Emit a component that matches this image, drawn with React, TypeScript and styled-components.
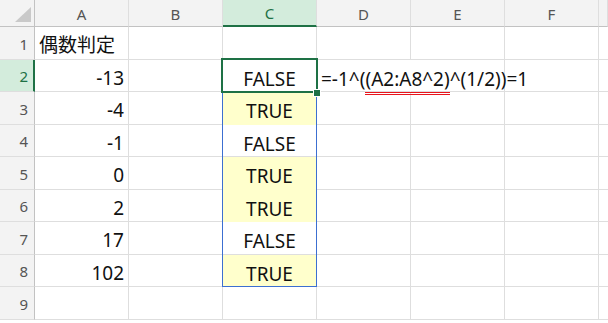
import styled, { createGlobalStyle, css } from 'styled-components';

const GlobalStyle = createGlobalStyle`
  html, body {
    margin: 0;
    padding: 0;
    background: #fff;
    overflow: hidden;
  }
`;

const GRID = '#dedede';
const HEAD_LINE = '#c2c2c2';
const GREEN = '#1e7145';
const BLUE = '#3c6fd1';
const YELLOW = '#ffffcc';

const Sheet = styled.div`
  display: grid;
  grid-template-columns: 35px repeat(6, 94px) 1fr;
  grid-template-rows: 27px repeat(9, 32.5px);
  width: 608px;
  height: 323px;
  overflow: hidden;
  font-family: 'Noto Sans', 'Noto Sans CJK JP', sans-serif;
`;

const Corner = styled.div`
  position: relative;
  background: #f3f3f3;
  border-right: 1px solid ${HEAD_LINE};
  border-bottom: 1px solid ${HEAD_LINE};
  box-sizing: border-box;

  &::after {
    content: '';
    position: absolute;
    right: 3px;
    bottom: 4px;
    width: 0;
    height: 0;
    border-left: 16px solid transparent;
    border-bottom: 15px solid #c9c9c9;
  }
`;

const ColHead = styled.div<{ $selected?: boolean }>`
  display: flex;
  align-items: center;
  justify-content: center;
  box-sizing: border-box;
  font-size: 15px;
  padding-top: 1px;
  color: #555;
  background: #f3f3f3;
  border-right: 1px solid ${GRID};
  border-bottom: 1px solid ${HEAD_LINE};
  ${p =>
    p.$selected &&
    css`
      background: #d3ecdc;
      color: ${GREEN};
      border-bottom: 2px solid ${GREEN};
    `}
`;

const RowHead = styled.div<{ $selected?: boolean }>`
  display: flex;
  align-items: center;
  justify-content: flex-end;
  box-sizing: border-box;
  padding: 2px 6px 0 0;
  font-size: 15px;
  color: #555;
  background: #f3f3f3;
  border-right: 1px solid ${HEAD_LINE};
  border-bottom: 1px solid ${GRID};
  ${p =>
    p.$selected &&
    css`
      background: #d3ecdc;
      color: ${GREEN};
      border-right: 2px solid ${GREEN};
      padding-right: 5px;
    `}
`;

type Align = 'left' | 'right' | 'center';
type Mark = 'active' | 'top' | 'mid' | 'bottom';

const Cell = styled.div<{ $align?: Align; $fill?: boolean; $spill?: boolean; $mark?: Mark; $drop?: number }>`
  position: relative;
  display: flex;
  align-items: center;
  box-sizing: border-box;
  padding: ${p => p.$drop ?? 5}px 4px 0;
  font-size: 19px;
  color: #111;
  white-space: nowrap;
  justify-content: ${p =>
    p.$align === 'right' ? 'flex-end' : p.$align === 'center' ? 'center' : 'flex-start'};
  background: ${p => (p.$fill ? YELLOW : 'transparent')};
  border-right: 1px solid ${p => (p.$spill ? 'transparent' : GRID)};
  border-bottom: 1px solid ${p => (p.$fill ? 'transparent' : GRID)};
  z-index: ${p => (p.$mark === 'active' ? 2 : p.$mark ? 1 : 'auto')};

  ${p =>
    p.$mark === 'active' &&
    css`
      &::before {
        content: '';
        position: absolute;
        left: -2px;
        right: -2px;
        top: -2px;
        bottom: -2px;
        border: 2px solid ${GREEN};
        pointer-events: none;
      }
      &::after {
        content: '';
        position: absolute;
        right: -4px;
        bottom: -5px;
        width: 6px;
        height: 6px;
        background: ${GREEN};
        outline: 1px solid #fff;
      }
    `}

  ${p =>
    p.$mark &&
    p.$mark !== 'active' &&
    css`
      &::before {
        content: '';
        position: absolute;
        left: -1px;
        right: -1px;
        top: ${p.$mark === 'top' ? '-1px' : '0'};
        bottom: -1px;
        border-left: 1px solid ${BLUE};
        border-right: 1px solid ${BLUE};
        ${p.$mark === 'bottom' && `border-bottom: 1px solid ${BLUE};`}
        pointer-events: none;
      }
    `}
`;

const Formula = styled.span`
  position: relative;
  z-index: 3;
`;

const Squiggle = styled.span`
  border-bottom: 3px double #e8141c;
`;

const COLS = ['A', 'B', 'C', 'D', 'E', 'F'];

type Row = { a?: string; aAlign?: Align; c?: string };

const ROWS: Row[] = [
  { a: '偶数判定', aAlign: 'left' },
  { a: '-13', c: 'FALSE' },
  { a: '-4', c: 'TRUE' },
  { a: '-1', c: 'FALSE' },
  { a: '0', c: 'TRUE' },
  { a: '2', c: 'TRUE' },
  { a: '17', c: 'FALSE' },
  { a: '102', c: 'TRUE' },
  {},
];

const markFor = (n: number): Mark | undefined => {
  if (n === 2) return 'active';
  if (n === 3) return 'top';
  if (n === 8) return 'bottom';
  if (n > 3 && n < 8) return 'mid';
  return undefined;
};

export default function App() {
  return (
    <>
      <GlobalStyle />
      <Sheet>
        <Corner />
        {COLS.map(c => (
          <ColHead key={c} $selected={c === 'C'}>
            {c}
          </ColHead>
        ))}
        <ColHead />

        {ROWS.map((row, i) => {
          const n = i + 1;
          return [
            <RowHead key={`h${n}`} $selected={n === 2}>
              {n}
            </RowHead>,
            <Cell key={`a${n}`} $align={row.aAlign ?? 'right'} $drop={n === 1 ? 3 : 5}>
              {row.a}
            </Cell>,
            <Cell key={`b${n}`} />,
            <Cell
              key={`c${n}`}
              $align="center"
              $fill={row.c === 'TRUE'}
              $mark={markFor(n)}
              $drop={7}
            >
              {row.c}
            </Cell>,
            <Cell key={`d${n}`} $spill={n === 2} $drop={7}>
              {n === 2 && (
                <Formula>
                  =-1^(<Squiggle>(A2:A8^2)</Squiggle>^(1/2))=1
                </Formula>
              )}
            </Cell>,
            <Cell key={`e${n}`} />,
            <Cell key={`f${n}`} />,
            <Cell key={`g${n}`} style={{ borderRight: 'none' }} />,
          ];
        })}
      </Sheet>
    </>
  );
}
